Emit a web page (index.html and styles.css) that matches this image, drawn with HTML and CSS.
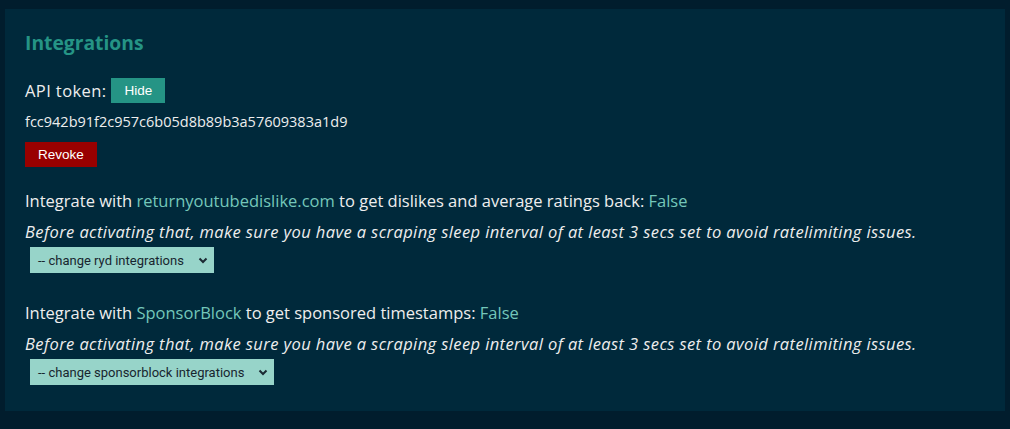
FILE: index.html
```html
<!DOCTYPE html>
<html>
<head>
<meta charset="utf-8">
<link rel="stylesheet" href="styles.css">
</head>
<body>
<div class="card">
  <h2 class="title">Integrations</h2>
  <div class="token-row"><span class="label">API token:</span><button class="btn btn-teal">Hide</button></div>
  <p class="token">fcc942b91f2c957c6b05d8b89b3a57609383a1d9</p>
  <button class="btn btn-red">Revoke</button>

  <div class="group">
    <p class="line">Integrate with <a href="#" class="link">returnyoutubedislike.com</a> to get dislikes and average ratings back: <span class="val">False</span></p>
    <p class="note">Before activating that, make sure you have a scraping sleep interval of at least 3 secs set to avoid ratelimiting issues.</p>
    <div class="sel">-- change ryd integrations <svg width="10" height="7" viewBox="0 0 10 7"><path d="M1.5 1.5 L5 5 L8.5 1.5" fill="none" stroke="#1b2a33" stroke-width="2"/></svg></div>
  </div>

  <div class="group">
    <p class="line">Integrate with <a href="#" class="link">SponsorBlock</a> to get sponsored timestamps: <span class="val">False</span></p>
    <p class="note">Before activating that, make sure you have a scraping sleep interval of at least 3 secs set to avoid ratelimiting issues.</p>
    <div class="sel">-- change sponsorblock integrations <svg width="10" height="7" viewBox="0 0 10 7"><path d="M1.5 1.5 L5 5 L8.5 1.5" fill="none" stroke="#1b2a33" stroke-width="2"/></svg></div>
  </div>
</div>
</body>
</html>
```
FILE: styles.css
```css
html, body {
  margin: 0;
  padding: 0;
  background: #011d2d;
}
body {
  padding: 9px 5px 18px 5px;
  font-family: "Open Sans", "Noto Sans", sans-serif;
  color: #eeeeee;
  font-size: 16.5px;
}
.card {
  background: #00293b;
  padding: 22px 20px 26px 20px;
}
.title {
  margin: 0;
  font-size: 19.3px;
  font-weight: 700;
  color: #259485;
  line-height: 24px;
}
.token-row {
  margin-top: 23px;
  display: flex;
  align-items: center;
  gap: 5px;
  height: 25px;
}
.label { letter-spacing: 0.4px; }
.btn {
  border: none;
  color: #fff;
  font-family: "Liberation Sans", Arial, sans-serif;
  font-size: 13.5px;
  height: 25px;
  padding: 0 13px;
  cursor: pointer;
}
.btn-teal { background: #259485; }
.btn-red { background: #990000; display: block; }
.token {
  margin: 9px 0 10px 0;
  line-height: 20px;
  font-size: 14.5px;
}
.group {
  margin-top: 22px;
}
.group + .group { margin-top: 28px; }
.line, .note {
  margin: 0;
  line-height: 24px;
}
.note {
  font-style: italic;
  margin-top: 7px;
  letter-spacing: 0.4px;
}
.link { color: #74c7ba; text-decoration: none; }
.val { color: #74c7ba; }
.sel {
  margin: 3px 0 0 5px;
  display: inline-flex;
  align-items: center;
  height: 26px;
  background: #97d4c9;
  color: #17262f;
  font-family: Roboto, "Liberation Sans", sans-serif;
  font-size: 13px;
  padding: 0 6px 0 8px;
  vertical-align: top;
}
.sel svg { margin-left: 14px; }
```
